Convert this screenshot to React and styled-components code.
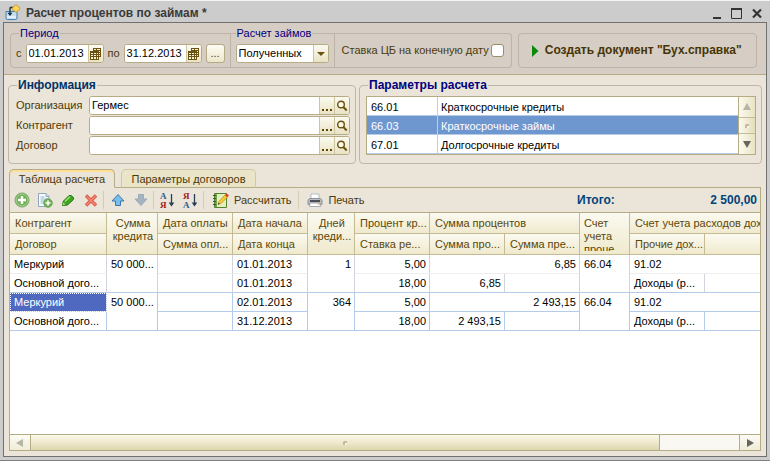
import { useState } from "react";
import styled, { createGlobalStyle } from "styled-components";

const GlobalStyle = createGlobalStyle`
  * {
    box-sizing: border-box;
  }
  body {
    margin: 0;
    background: #cccccc;
  }
  body, button, input, select {
    font-family: "Liberation Sans", Arial, sans-serif;
    font-size: 11px;
    line-height: 13px;
    color: #4b3a08;
  }
  button {
    padding: 0;
    border: 0;
    background: none;
  }
  svg {
    display: block;
    flex: none;
  }
`;

const Window = styled.div`
  display: flex;
  flex-direction: column;
  min-height: 100vh;
  padding: 0 3px 3px 3px;
  background: #cccccc;
  border-top: 1px solid #f4f4f4;
  border-bottom: 1px solid #808080;
`;
const TitleBar = styled.header`
  display: flex;
  align-items: center;
  gap: 4px;
  height: 21px;
  padding: 2px 2px 0 2px;
`;
const Title = styled.h1`
  flex: 1;
  margin: 0;
  font-size: 12px;
  line-height: 16px;
  color: #3a3a3a;
`;
const WindowButtons = styled.div`
  display: flex;
  gap: 6px;
`;
const Body = styled.main`
  display: flex;
  flex-direction: column;
  flex: 1;
  background: #ebe4d9;
  border: 1px solid #707070;
`;

const TopBar = styled.section`
  display: flex;
  gap: 6px;
  padding: 4px 9px 6px 6px;
  background: #d6cdc4;
  border-bottom: 1px solid #b5ab84;
`;
const Section = styled.fieldset`
  display: flex;
  align-items: center;
  min-width: 0;
  height: ${(props) => (props.$bare ? 35 : 41)}px;
  margin: ${(props) => (props.$bare ? 6 : 0)}px 0 0;
  padding: 0 ${(props) => props.$pad || 5}px;
  border: 1px solid #bdb3a6;
  border-left-width: ${(props) => (props.$first ? 1 : 0)}px;
  border-radius: ${(props) => (props.$first ? "4px 0 0 4px" : props.$bare ? "0 4px 4px 0" : "0")};
`;
const SectionRow = styled.div`
  display: flex;
  align-items: center;
  gap: ${(props) => props.$gap || 4}px;
  color: #4b3a08;
`;
const Legend = styled.legend`
  padding: 0 1px;
  margin-left: ${(props) => props.$indent || 0}px;
  color: ${(props) => props.$color || "#000080"};
  font-weight: ${(props) => (props.$bold ? "bold" : "normal")};
  font-size: ${(props) => (props.$bold ? 12 : 11)}px;
`;
const Groups = styled.div`
  display: flex;
`;

const Field = styled.div`
  display: flex;
  flex: ${(props) => (props.$wide ? 1 : "none")};
  width: ${(props) => props.$width || "auto"};
  height: 19px;
  overflow: hidden;
  background: #fff;
  border: 1px solid #b5ab84;
  border-radius: 3px;
`;
const TextInput = styled.input`
  flex: 1;
  min-width: 0;
  padding: 0 2px;
  border: 0;
  outline: 0;
  background: #fff;
  color: #000;
`;
const FieldButton = styled.button`
  display: flex;
  justify-content: center;
  align-items: ${(props) => (props.$low ? "flex-end" : "center")};
  width: 15px;
  padding-bottom: ${(props) => (props.$low ? 3 : 0)}px;
  background: linear-gradient(#fbfaef, #e9e3c4);
  border-left: 1px solid #cdc5a0;
`;
const SmallButton = styled.button`
  width: 19px;
  height: 19px;
  background: linear-gradient(#fdfcf4, #ece6ca);
  border: 1px solid #b5ab84;
  border-radius: 3px;
`;
const SelectBox = styled.div`
  display: grid;
  width: 93px;
  height: 19px;
  overflow: hidden;
  border: 1px solid #b5ab84;
  border-radius: 3px;
`;
const Select = styled.select`
  grid-area: 1 / 1;
  appearance: none;
  padding: 0 2px;
  border: 0;
  outline: 0;
  background: #fff;
  color: #000;
`;
const SelectArrow = styled.span`
  grid-area: 1 / 1;
  justify-self: end;
  display: flex;
  align-items: center;
  justify-content: center;
  width: 15px;
  pointer-events: none;
  background: linear-gradient(#fbfaef, #e9e3c4);
  border-left: 1px solid #cdc5a0;
`;
const Checkbox = styled.input`
  appearance: none;
  width: 13px;
  height: 13px;
  margin: 0;
  background: #fff;
  border: 1px solid #9a8f68;
  border-radius: 3px;
  &:checked {
    background: #8a7a3c;
  }
`;
const CreateButton = styled.button`
  display: flex;
  flex: 1;
  align-items: center;
  gap: 6px;
  margin-top: 6px;
  padding-left: 13px;
  border: 1px solid #bdb3a6;
  border-radius: 4px;
  color: #463505;
  font-weight: bold;
  font-size: 12px;
`;

const Middle = styled.section`
  display: grid;
  grid-template-columns: 348fr 403fr;
  gap: 3px;
  padding: 4px 4px 5px 4px;
`;
const GroupBox = styled.fieldset`
  display: flex;
  flex-direction: column;
  min-width: 0;
  height: 85px;
  margin: 0;
  padding: 4px 5px 7px 6px;
  border: 1px solid #c0b6a8;
  border-radius: 4px;
`;
const Form = styled.div`
  display: flex;
  flex-direction: column;
  gap: 1px;
`;
const FormRow = styled.div`
  display: flex;
  align-items: center;
`;
const FormLabel = styled.label`
  width: 74px;
  padding-left: 1px;
`;

const ListBox = styled.div`
  display: flex;
  height: 59px;
  border: 1px solid #b5ab84;
  background: #fff;
`;
const ListTable = styled.table`
  flex: 1;
  border-spacing: 0;
  table-layout: fixed;
  color: #000;
`;
const CodeCol = styled.col`
  width: 70px;
`;
const ListRow = styled.tr`
  height: 19px;
  background: ${(props) => (props.$active ? "#6f97cf" : "#fff")};
  color: ${(props) => (props.$active ? "#fff" : "#000")};
`;
const ListCell = styled.td`
  padding: 2px 4px 0;
  border-bottom: 1px solid #b5cbe6;
  & + & {
    padding-left: 3px;
    border-left: 1px solid #c9ccd4;
  }
`;
const VerticalScroll = styled.div`
  display: flex;
  flex-direction: column;
  width: 17px;
  border-left: 1px solid #b5ab84;
`;
const ScrollButton = styled.button`
  display: flex;
  flex: none;
  align-items: center;
  justify-content: center;
  width: ${(props) => (props.$across ? "20px" : "auto")};
  height: ${(props) => (props.$across ? "auto" : "20px")};
  background: ${(props) =>
    props.$across ? "linear-gradient(#fcfbf5, #f0ecd8)" : "linear-gradient(90deg, #fbfaef, #e9e3c4)"};
`;
const VerticalThumb = styled.div`
  display: flex;
  flex: 1;
  align-items: center;
  justify-content: center;
  background: linear-gradient(90deg, #fbfaef, #e4ddb9);
  border: solid #c5bc96;
  border-width: 1px 0;
`;

const Tabs = styled.div`
  display: flex;
  align-items: flex-end;
  height: 19px;
  padding: 0 5px;
`;
const TabLine = styled.div`
  flex: ${(props) => (props.$fill ? "1" : "none")};
  align-self: flex-end;
  width: ${(props) => (props.$fill ? "auto" : "6px")};
  border-bottom: 1px solid #b5ab84;
`;
const Tab = styled.button`
  width: ${(props) => props.$width}px;
  height: 19px;
  padding-top: 2px;
  background: ${(props) => (props.$active ? "#ebe4d9" : "#eae4c8")};
  border: 1px solid ${(props) => (props.$active ? "#b5ab84" : "#d0c8a8")};
  border-bottom-color: ${(props) => (props.$active ? "#ebe4d9" : "#b5ab84")};
  border-radius: 5px 5px 0 0;
  box-shadow: ${(props) => (props.$active ? "inset 0 2px #ffdf95" : "none")};
`;

const Panel = styled.section`
  display: flex;
  flex-direction: column;
  flex: 1;
  min-width: 0;
  margin: 0 5px 5px;
  border: solid #b5ab84;
  border-width: 0 1px 1px;
`;
const Toolbar = styled.div`
  display: flex;
  align-items: center;
  height: 24px;
`;
const ToolButton = styled.button`
  display: flex;
  align-items: center;
  justify-content: center;
  gap: 5px;
  min-width: ${(props) => (props.$labelled ? 0 : 23)}px;
  height: 22px;
  padding: ${(props) => (props.$labelled ? "0 6px" : "0")};
`;
const Divider = styled.span`
  width: 2px;
  height: 18px;
  margin: 0 1px;
  background: linear-gradient(90deg, #c8c0a0, #f6f2e4);
`;
const Total = styled.output`
  display: flex;
  justify-content: space-between;
  width: 183px;
  margin-left: auto;
  padding-right: 3px;
  color: #00457a;
  font-weight: bold;
  font-size: 12px;
`;

const TableArea = styled.div`
  flex: 1;
  overflow: hidden;
  background: #fff;
  border-top: 1px solid #b5ab84;
`;
const DataTable = styled.table`
  width: 100%;
  border-spacing: 0;
  table-layout: fixed;
  color: #000;
`;
const Col = styled.col`
  width: ${(props) => (props.$width ? props.$width + "px" : "auto")};
`;
const HeadCell = styled.th`
  height: 21px;
  padding: 0;
  background: linear-gradient(#fbfaf0, #efe9cd);
  border: solid #c5bc96;
  border-width: 0 1px 1px 0;
  color: #5c4708;
  font-weight: normal;
  text-align: ${(props) => props.$align || "left"};
  vertical-align: top;
  &:last-child {
    border-right: 0;
  }
`;
const HeadText = styled.div`
  height: ${(props) => (props.$tall ? 38 : 20)}px;
  padding: ${(props) => (props.$tall ? "4px 2px 0 4px" : "4px 0 0 5px")};
  overflow: hidden;
  white-space: ${(props) => (props.$tall ? "normal" : "nowrap")};
`;
const DataRow = styled.tr`
  height: 19px;
`;
const Cell = styled.td`
  padding: 1px 3px 0 4px;
  overflow: hidden;
  white-space: nowrap;
  vertical-align: top;
  line-height: 17px;
  text-align: ${(props) => (props.$right ? "right" : "left")};
  background: ${(props) => (props.$selected ? "#4f69c0" : "#fff")};
  color: ${(props) => (props.$selected ? "#fff" : "#000")};
  outline: ${(props) => (props.$selected ? "1px dotted #fff" : "none")};
  outline-offset: -1px;
  border: solid #c8cdd6;
  border-width: 0 1px 1px 0;
  border-right-color: ${(props) => (props.$current ? "#b4cbea" : "#d2d3dc")};
  border-bottom-color: ${(props) => (props.$soft ? "#eeeeee" : "#b4cbea")};
  &:last-child {
    border-right: 0;
  }
`;

const HorizontalScroll = styled.div`
  display: flex;
  height: 16px;
  border-top: 1px solid #b5ab84;
  background: #faf8f2;
`;
const HorizontalThumb = styled.div`
  display: flex;
  flex: 629;
  align-items: center;
  justify-content: center;
  background: linear-gradient(#faf8ea, #efe9cd 50%, #ddd5ae);
  border: solid #b5ab84;
  border-width: 0 1px;
`;
const Track = styled.div`
  flex: 79;
  border-right: 1px solid #b5ab84;
`;

const AppIcon = () => (
  <svg width="17" height="17" viewBox="0 0 17 17">
    <path d="M1 7.500h11v6.500a1.500 1.500 0 0 1-1.500 1.500h-8A1.500 1.500 0 0 1 1 14z" fill="#c5def0" stroke="#4681ad" />
    <path d="M2 13h9" stroke="#fff" />
    <path d="M5 3.500V11M5 3.500h4" stroke="#1d2d3c" strokeWidth="1.300" fill="none" />
    <path d="M2.500 8.800h5L5 12z" fill="#1d2d3c" />
    <path d="M11 .6 15.200 4.500 11 8.400 6.800 4.500z" fill="#ffd955" stroke="#c5992b" />
  </svg>
);
const MinimizeIcon = () => (
  <svg width="16" height="16" viewBox="0 0 16 16">
    <path d="M4 12h8v2H4z" fill="#333" />
  </svg>
);
const MaximizeIcon = () => (
  <svg width="12" height="16" viewBox="0 0 12 16">
    <path d="M.5 4v9.500h10V4" fill="none" stroke="#333" />
    <path d="M0 3h11v2H0z" fill="#333" />
  </svg>
);
const CloseIcon = () => (
  <svg width="16" height="16" viewBox="0 0 16 16">
    <path d="m4 4.500 8 8m0-8-8 8" stroke="#333" strokeWidth="2.200" />
  </svg>
);
const CalendarIcon = () => (
  <svg width="11" height="12" viewBox="0 0 11 12">
    <path d="M3 0h8v9H9v3H0V3h3z" fill="#6b5210" />
    <path d="M1 5h2v1H1zM4 5h2v1H4zM7 5h1v1H7zM1 7h2v1H1zM4 7h2v1H4zM7 7h1v1H7zM1 9h2v2H1zM4 9h2v2H4zM7 9h1v2H7zM4 1h2v1H4zM7 1h3v1H7zM9 3h1v1H9zM9 5h1v1H9zM9 7h1v1H9z" fill="#f7f2da" />
  </svg>
);
const ArrowIcon = ({ color = "#6b5210", d = "M0 0h8L4 4z" }) => (
  <svg width="8" height="8" viewBox="0 0 8 8">
    <path d={d} fill={color} />
  </svg>
);
const DotsIcon = () => (
  <svg width="11" height="2" viewBox="0 0 11 2">
    <path d="M0 0h2v2H0zM4 0h2v2H4zM8 0h2v2H8z" fill="#5c4708" />
  </svg>
);
const SearchIcon = () => (
  <svg width="12" height="12" viewBox="0 0 12 12">
    <circle cx="5" cy="4.500" r="3.300" fill="#fdfbe8" stroke="#6b5210" strokeWidth="1.400" />
    <path d="m7.300 7 3.400 3.500" stroke="#6b5210" strokeWidth="2" />
  </svg>
);
const PlayIcon = () => (
  <svg width="7" height="12" viewBox="0 0 7 12">
    <path d="M0 0v12l6.500-6z" fill="#0a8a0a" />
  </svg>
);
const GripIcon = () => (
  <svg width="6" height="6" viewBox="0 0 6 6">
    <circle cx="3" cy="3" r="2" fill="#fbf9ea" />
    <path d="M1 5V2.500Q1 1 2.500 1H5v2H3v2z" fill="#c2baa0" />
  </svg>
);
const AddIcon = () => (
  <svg width="16" height="16" viewBox="0 0 16 16">
    <circle cx="8" cy="8" r="7" fill="#72b356" stroke="#76a765" />
    <circle cx="8" cy="8" r="6" fill="none" stroke="#a8d496" />
    <path d="M8 4v8M4 8h8" stroke="#fff" strokeWidth="2.400" />
  </svg>
);
const CopyIcon = () => (
  <svg width="16" height="16" viewBox="0 0 16 16">
    <path d="M1.500 1.500h7.500l3 3v10H1.500z" fill="#f7fbff" stroke="#8fa6bb" />
    <path d="M9 1.500v3h3" fill="#d3e1ee" stroke="#8fa6bb" />
    <path d="M3.500 5h4M3.500 7h6M3.500 9h4M3.500 11h3" stroke="#95b2cb" />
    <circle cx="11" cy="11" r="4.300" fill="#72b356" stroke="#5f9a4b" strokeWidth=".8" />
    <path d="M11 8.500v5M8.500 11h5" stroke="#fff" strokeWidth="1.600" />
  </svg>
);
const EditIcon = () => (
  <svg width="16" height="16" viewBox="0 0 16 16">
    <path d="m2.500 13.500 1-4.500 5.500-5.500h2l2.500 2v2L7.500 13z" fill="#3da51e" stroke="#257a12" />
    <path d="m5 9.500 5-5" stroke="#9be07a" strokeWidth="1.500" />
    <path d="m2.500 13.500.7-3.500 2.800 2.600z" fill="#e9f4c6" stroke="#257a12" strokeWidth=".6" />
  </svg>
);
const DeleteIcon = () => (
  <svg width="16" height="16" viewBox="0 0 16 16">
    <path d="m3 3.500 10 10m0-10-10 10" stroke="#d95846" strokeWidth="3.400" />
    <path d="m3.500 4 9 9m0-9-9 9" stroke="#f48673" strokeWidth="1.600" />
  </svg>
);
const MoveIcon = ({ down }) => (
  <svg width="16" height="16" viewBox="0 0 16 16">
    <path
      d={down ? "M5.500 2.500h5V7h3.500L8 13.500 2 7h3.500z" : "M5.500 13.500h5V9h3.500L8 2.500 2 9h3.500z"}
      fill={down ? "#a6b4c1" : "#79bdec"}
      stroke={down ? "#9ca9b6" : "#3b78ae"}
    />
  </svg>
);
const Letter = styled.text`
  font: bold 9px "Liberation Serif", serif;
`;
const SortIcon = ({ top, bottom, topColor, bottomColor }) => (
  <svg width="17" height="18" viewBox="0 0 17 18">
    <Letter x="1" y="8" fill={topColor}>{top}</Letter>
    <Letter x="1" y="17" fill={bottomColor}>{bottom}</Letter>
    <path d="M12.500 3v10" stroke="#263f58" strokeWidth="1.300" />
    <path d="M9.700 11.500h5.600L12.500 15.500z" fill="#263f58" />
  </svg>
);
const NotebookIcon = () => (
  <svg width="17" height="17" viewBox="0 0 17 17">
    <path d="M2.500 1.500h12v14h-12z" fill="#fff" stroke="#52822b" />
    <path d="M3 2h11v13H3z" fill="#e4efbf" />
    <path d="M4 2v13" stroke="#73a64a" strokeWidth="2" />
    <path d="M1 3.500h3M1 6.500h3M1 9.500h3M1 12.500h3" stroke="#3f5d2a" />
    <path d="m6 12.500 1-3L13 3l2.500 2L9 11.500z" fill="#f8cf36" stroke="#b38017" strokeWidth=".7" />
    <path d="m13 3 1.500-1.500L17 3.500 15.500 5z" fill="#dd3527" />
    <path d="m6 12.500.5-1.700 1.300 1z" fill="#333" />
  </svg>
);
const PrinterIcon = () => (
  <svg width="16" height="16" viewBox="0 0 16 16">
    <path d="M4 2h8v6H4z" fill="#fff" stroke="#a6adb8" strokeWidth=".8" />
    <path d="M2.500 6.500h11L15 8v4.500H1V8z" fill="#b7bcc5" stroke="#7d828b" strokeWidth=".8" />
    <path d="M3 8h10v2H3z" fill="#4b4f56" />
    <path d="M3 11h10l.5 3.500h-11z" fill="#fff" stroke="#9298a2" strokeWidth=".8" />
    <path d="M10.500 12h3" stroke="#df9a60" />
  </svg>
);

const accounts = [
  ["66.01", "Краткосрочные кредиты"],
  ["66.03", "Краткосрочные займы"],
  ["67.01", "Долгосрочные кредиты"],
];
const columnWidths = [97, 51, 75, 75, 47, 75, 75, 75, 50, 75, null];
const loans = [
  { start: "01.01.2013", end: "01.01.2013", days: "1", interest: "6,85" },
  { start: "02.01.2013", end: "31.12.2013", days: "364", interest: "2 493,15", current: true },
];

const DateField = ({ id, value }) => (
  <Field $width="78px">
    <TextInput id={id} defaultValue={value} />
    <FieldButton aria-label="Календарь">
      <CalendarIcon />
    </FieldButton>
  </Field>
);

const InfoRow = ({ id, label, value }) => (
  <FormRow>
    <FormLabel htmlFor={id}>{label}</FormLabel>
    <Field $wide>
      <TextInput id={id} defaultValue={value} />
      <FieldButton $low aria-label="Выбрать">
        <DotsIcon />
      </FieldButton>
      <FieldButton aria-label="Открыть">
        <SearchIcon />
      </FieldButton>
    </Field>
  </FormRow>
);

const Head = ({ children, tall, align, span }) => (
  <HeadCell rowSpan={tall ? 2 : 1} colSpan={span || 1} $align={align}>
    <HeadText $tall={tall}>{children}</HeadText>
  </HeadCell>
);

const LoanRows = ({ loan }) => {
  const { current } = loan;
  return (
    <>
      <DataRow>
        <Cell $soft={!current} $current={current} $selected={current}>Меркурий</Cell>
        <Cell rowSpan={2} $current={current}>50 000...</Cell>
        <Cell $soft={!current} $current={current} />
        <Cell $soft={!current} $current={current}>{loan.start}</Cell>
        <Cell rowSpan={2} $right $current={current}>{loan.days}</Cell>
        <Cell $soft={!current} $right $current={current}>5,00</Cell>
        <Cell $soft={!current} $right $current={current} colSpan={2}>{loan.interest}</Cell>
        <Cell rowSpan={2} $current={current}>66.04</Cell>
        <Cell $soft={!current} $current={current} colSpan={2}>91.02</Cell>
      </DataRow>
      <DataRow>
        <Cell $current={current}>Основной дого...</Cell>
        <Cell $current={current} />
        <Cell $current={current}>{loan.end}</Cell>
        <Cell $right $current={current}>18,00</Cell>
        <Cell $right $current={current}>{loan.interest}</Cell>
        <Cell $current={current} />
        <Cell $current={current}>Доходы (р...</Cell>
        <Cell $current={current} />
      </DataRow>
    </>
  );
};

const App = () => {
  const [account, setAccount] = useState("66.03");
  const [tab, setTab] = useState(0);

  return (
    <Window>
      <GlobalStyle />
      <TitleBar>
        <AppIcon />
        <Title>Расчет процентов по займам *</Title>
        <WindowButtons>
          <button aria-label="Свернуть"><MinimizeIcon /></button>
          <button aria-label="Развернуть"><MaximizeIcon /></button>
          <button aria-label="Закрыть"><CloseIcon /></button>
        </WindowButtons>
      </TitleBar>
      <Body>
        <TopBar>
          <Groups>
            <Section $first>
              <Legend $indent={3}>Период</Legend>
              <SectionRow>
                <label htmlFor="from">с</label>
                <DateField id="from" value="01.01.2013" />
                <label htmlFor="to">по</label>
                <DateField id="to" value="31.12.2013" />
                <SmallButton aria-label="Выбрать период">...</SmallButton>
              </SectionRow>
            </Section>
            <Section>
              <Legend>
                <label htmlFor="kind">Расчет займов</label>
              </Legend>
              <SelectBox>
                <Select id="kind" defaultValue="in">
                  <option value="in">Полученных</option>
                  <option value="out">Выданных</option>
                </Select>
                <SelectArrow>
                  <ArrowIcon d="M0 2h8L4 6z" />
                </SelectArrow>
              </SelectBox>
            </Section>
            <Section $bare $pad={7}>
              <SectionRow $gap={2}>
                <label htmlFor="rate">Ставка ЦБ на конечную дату</label>
                <Checkbox id="rate" type="checkbox" />
              </SectionRow>
            </Section>
          </Groups>
          <CreateButton>
            <PlayIcon />
            Создать документ "Бух.справка"
          </CreateButton>
        </TopBar>

        <Middle>
          <GroupBox>
            <Legend $bold $indent={2} $color="#003366">Информация</Legend>
            <Form>
              <InfoRow id="org" label="Организация" value="Гермес" />
              <InfoRow id="partner" label="Контрагент" value="" />
              <InfoRow id="contract" label="Договор" value="" />
            </Form>
          </GroupBox>
          <GroupBox>
            <Legend $bold $indent={2}>Параметры расчета</Legend>
            <ListBox>
              <ListTable>
                <colgroup>
                  <CodeCol />
                  <col />
                </colgroup>
                <tbody>
                  {accounts.map(([code, name]) => (
                    <ListRow key={code} $active={code === account} onClick={() => setAccount(code)}>
                      <ListCell>{code}</ListCell>
                      <ListCell>{name}</ListCell>
                    </ListRow>
                  ))}
                </tbody>
              </ListTable>
              <VerticalScroll>
                <ScrollButton aria-label="Вверх">
                  <ArrowIcon color="#b9b5a4" d="M0 7h8L4 0z" />
                </ScrollButton>
                <VerticalThumb>
                  <GripIcon />
                </VerticalThumb>
                <ScrollButton aria-label="Вниз">
                  <ArrowIcon color="#66645c" d="M0 1h8L4 8z" />
                </ScrollButton>
              </VerticalScroll>
            </ListBox>
          </GroupBox>
        </Middle>

        <Tabs>
          <Tab $width={106} $active={tab === 0} onClick={() => setTab(0)}>Таблица расчета</Tab>
          <TabLine />
          <Tab $width={135} $active={tab === 1} onClick={() => setTab(1)}>Параметры договоров</Tab>
          <TabLine $fill />
        </Tabs>

        <Panel>
          <Toolbar>
            <ToolButton aria-label="Добавить"><AddIcon /></ToolButton>
            <ToolButton aria-label="Скопировать"><CopyIcon /></ToolButton>
            <ToolButton aria-label="Изменить"><EditIcon /></ToolButton>
            <ToolButton aria-label="Удалить"><DeleteIcon /></ToolButton>
            <Divider />
            <ToolButton aria-label="Переместить вверх"><MoveIcon /></ToolButton>
            <ToolButton aria-label="Переместить вниз"><MoveIcon down /></ToolButton>
            <Divider />
            <ToolButton aria-label="По возрастанию">
              <SortIcon top="А" bottom="Я" topColor="#2b5f8c" bottomColor="#a02020" />
            </ToolButton>
            <ToolButton aria-label="По убыванию">
              <SortIcon top="Я" bottom="А" topColor="#a02020" bottomColor="#2b5f8c" />
            </ToolButton>
            <Divider />
            <ToolButton $labelled>
              <NotebookIcon />
              Рассчитать
            </ToolButton>
            <Divider />
            <ToolButton $labelled>
              <PrinterIcon />
              Печать
            </ToolButton>
            <Total>
              <span>Итого:</span>
              <span>2 500,00</span>
            </Total>
          </Toolbar>
          <TableArea>
            <DataTable>
              <colgroup>
                {columnWidths.map((width, i) => (
                  <Col key={i} $width={width} />
                ))}
              </colgroup>
              <thead>
                <tr>
                  <Head>Контрагент</Head>
                  <Head tall align="center">Сумма кредита</Head>
                  <Head>Дата оплаты</Head>
                  <Head>Дата начала</Head>
                  <Head tall align="center">Дней креди...</Head>
                  <Head>Процент кр...</Head>
                  <Head span={2}>Сумма процентов</Head>
                  <Head tall>Счет учета проце</Head>
                  <Head span={2}>Счет учета расходов доходов</Head>
                </tr>
                <tr>
                  <Head>Договор</Head>
                  <Head>Сумма опл...</Head>
                  <Head>Дата конца</Head>
                  <Head>Ставка ре...</Head>
                  <Head>Сумма про...</Head>
                  <Head>Сумма пре...</Head>
                  <Head>Прочие дох...</Head>
                  <Head />
                </tr>
              </thead>
              <tbody>
                {loans.map((loan) => (
                  <LoanRows key={loan.start} loan={loan} />
                ))}
              </tbody>
            </DataTable>
          </TableArea>
          <HorizontalScroll>
            <ScrollButton $across aria-label="Влево">
              <ArrowIcon color="#b9b5a4" d="M7 0v8L0 4z" />
            </ScrollButton>
            <HorizontalThumb>
              <GripIcon />
            </HorizontalThumb>
            <Track />
            <ScrollButton $across aria-label="Вправо">
              <ArrowIcon color="#66645c" d="M1 0v8l7-4z" />
            </ScrollButton>
          </HorizontalScroll>
        </Panel>
      </Body>
    </Window>
  );
};

export default App;
